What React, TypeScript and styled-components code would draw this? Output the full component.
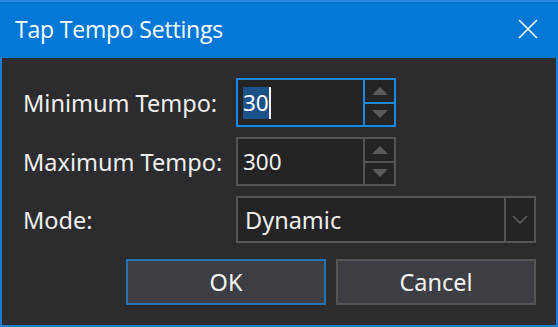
import React from "react";
import styled, { createGlobalStyle } from "styled-components";

const Global = createGlobalStyle`
  html, body { margin: 0; padding: 0; background: #2b2b2d; }
  body { font-family: "Noto Sans", "Open Sans", sans-serif; }
  * { box-sizing: border-box; }
`;

const Window = styled.div`
  width: 558px;
  height: 327px;
  border: 2px solid #1a80d6;
  border-top: none;
  background: #2c2c2e;
  display: flex;
  flex-direction: column;
`;

const TitleBar = styled.div`
  height: 58px;
  background: #0078d7;
  border-top: 2px solid #2a87d9;
  display: flex;
  align-items: center;
  justify-content: space-between;
  padding: 0 20px 2px 15px;
  color: #ffffff;
  font-family: "Open Sans", "Noto Sans", sans-serif;
  font-size: 23px;
  margin: 0 -2px;
`;

const Title = styled.span`
  letter-spacing: -0.2px;
`;

const CloseIcon = styled.svg`
  width: 20px;
  height: 20px;
`;

const Body = styled.div`
  flex: 1;
  padding: 20px 20px 20px 21px;
  display: flex;
  flex-direction: column;
`;

const Form = styled.div`
  display: grid;
  grid-template-columns: 213px 1fr;
  grid-auto-rows: auto;
  row-gap: 10px;
  align-items: center;
`;

const Label = styled.label`
  color: #f0f0f0;
  font-size: 23.5px;
`;

const SpinBox = styled.div<{ $focused?: boolean }>`
  width: 160px;
  height: 49px;
  display: flex;
  background: #242424;
  border: 2px solid ${(p) => (p.$focused ? "#1589e8" : "#555555")};
`;

const SpinInput = styled.div<{ $focused?: boolean }>`
  flex: 1;
  display: flex;
  align-items: center;
  padding-left: 5px;
  color: #f4f4f4;
  font-size: 22.5px;
  border-right: 2px solid ${(p) => (p.$focused ? "#1589e8" : "#555555")};
`;

const Selected = styled.span`
  background: #1c5289;
  color: #ffffff;
  line-height: 32px;
`;

const Caret = styled.span`
  display: inline-block;
  width: 2px;
  height: 32px;
  background: #ffffff;
`;

const SpinButtons = styled.div`
  width: 29px;
  display: flex;
  flex-direction: column;
`;

const SpinButton = styled.div<{ $focused?: boolean; $top?: boolean }>`
  flex: 1;
  display: flex;
  align-items: center;
  justify-content: center;
  border-bottom: ${(p) =>
    p.$top ? `2px solid ${p.$focused ? "#1589e8" : "#555555"}` : "none"};
`;

const Arrow = styled.svg`
  width: 16px;
  height: 9px;
`;

const Combo = styled.div`
  width: 300px;
  height: 47px;
  display: flex;
  background: #242424;
  border: 2px solid #555555;
`;

const ComboText = styled.div`
  flex: 1;
  display: flex;
  align-items: center;
  padding-left: 7px;
  color: #f0f0f0;
  font-size: 23.5px;
  border-right: 2px solid #555555;
`;

const ComboButton = styled.div`
  width: 28px;
  display: flex;
  align-items: center;
  justify-content: center;
`;

const ButtonRow = styled.div`
  display: flex;
  justify-content: flex-end;
  gap: 10px;
  margin-top: 16px;
`;

const Button = styled.button<{ $default?: boolean }>`
  width: 200px;
  height: 46px;
  background: #3d3e44;
  border: 2px solid ${(p) => (p.$default ? "#2770b2" : "#555555")};
  color: #f4f4f4;
  font-family: "Noto Sans", "Open Sans", sans-serif;
  font-size: 23.5px;
  padding: 0;
`;

const Up = () => (
  <Arrow viewBox="0 0 16 9">
    <polygon points="0,9 8,1 16,9" fill="#5a5a5a" />
  </Arrow>
);
const Down = () => (
  <Arrow viewBox="0 0 16 9">
    <polygon points="0,0 16,0 8,8" fill="#5a5a5a" />
  </Arrow>
);

export default function App() {
  return (
    <>
      <Global />
      <Window>
        <TitleBar>
          <Title>Tap Tempo Settings</Title>
          <CloseIcon viewBox="0 0 20 20">
            <path d="M1 1 L19 19 M19 1 L1 19" stroke="#ffffff" strokeWidth="1.6" fill="none" />
          </CloseIcon>
        </TitleBar>
        <Body>
          <Form>
            <Label>Minimum Tempo:</Label>
            <SpinBox $focused>
              <SpinInput $focused>
                <Selected>30</Selected>
                <Caret />
              </SpinInput>
              <SpinButtons>
                <SpinButton $focused $top>
                  <Up />
                </SpinButton>
                <SpinButton $focused>
                  <Down />
                </SpinButton>
              </SpinButtons>
            </SpinBox>
            <Label>Maximum Tempo:</Label>
            <SpinBox>
              <SpinInput>300</SpinInput>
              <SpinButtons>
                <SpinButton $top>
                  <Up />
                </SpinButton>
                <SpinButton>
                  <Down />
                </SpinButton>
              </SpinButtons>
            </SpinBox>
            <Label>Mode:</Label>
            <Combo>
              <ComboText>Dynamic</ComboText>
              <ComboButton>
                <Arrow viewBox="0 0 16 9">
                  <path d="M1 1 L8 8 L15 1" stroke="#5e5e5e" strokeWidth="1.5" fill="none" />
                </Arrow>
              </ComboButton>
            </Combo>
          </Form>
          <ButtonRow>
            <Button $default>OK</Button>
            <Button>Cancel</Button>
          </ButtonRow>
        </Body>
      </Window>
    </>
  );
}
